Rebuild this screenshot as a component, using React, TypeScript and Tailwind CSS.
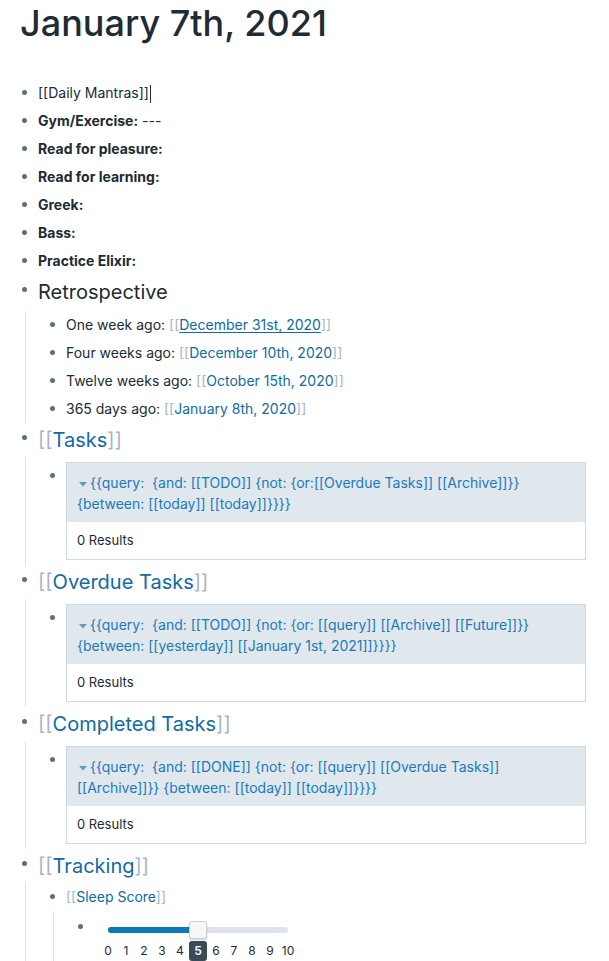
import React from "react";

const font = { fontFamily: "Inter, 'Noto Sans', sans-serif" };

function Dot({ top = "mt-[11px]" }: { top?: string }) {
  return (
    <div className="w-[18px] shrink-0">
      <div className={`ml-[2px] ${top} h-[5px] w-[5px] rounded-full bg-[#5c7080]`} />
    </div>
  );
}

function Row({ children }: { children: React.ReactNode }) {
  return (
    <div className="flex h-[28px] items-start">
      <Dot />
      <div className="text-[14px] leading-[28px] text-[#202b33]">{children}</div>
    </div>
  );
}

function Children({ children }: { children: React.ReactNode }) {
  return <div className="ml-[5px] border-l border-[#dbe2e8] pl-[22px]">{children}</div>;
}

function Br({ c }: { c: string }) {
  return <span className="text-[#a7b6c2]">{c}</span>;
}

function Ref({ children, underline }: { children: React.ReactNode; underline?: boolean }) {
  return (
    <span>
      <Br c="[[" />
      <span className={`text-[#106ba3] ${underline ? "underline underline-offset-2" : ""}`}>{children}</span>
      <Br c="]]" />
    </span>
  );
}

function Heading({ children, tall }: { children: React.ReactNode; tall?: boolean }) {
  return (
    <div className={`flex items-start ${tall ? "h-[36px]" : "h-[34px]"}`}>
      <Dot top="mt-[12px]" />
      <div className="text-[20px] leading-[34px] text-[#202b33]">{children}</div>
    </div>
  );
}

function Query({ lines }: { lines: React.ReactNode }) {
  return (
    <div className="flex items-start py-[5px]">
      <Dot />
      <div className="flex-1 border border-[#ced9e0]">
        <div className="whitespace-pre-wrap bg-[#e1e8ed] pb-[8px] pl-[10px] pr-[10px] pt-[9px] text-[14px] leading-[21px] text-[#1a7ab9]">
          {lines}
        </div>
        <div className="bg-white pl-[10px] text-[13px] leading-[37px] text-[#202b33]">0 Results</div>
      </div>
    </div>
  );
}

function Tri() {
  return (
    <svg width="12" height="8" viewBox="0 0 12 8" className="mr-[1px] inline-block align-middle">
      <path d="M2 2 L10 2 L6 6.5 Z" fill="#5b9bc8" />
    </svg>
  );
}

function Slider() {
  const nums = [0, 1, 2, 3, 4, 5, 6, 7, 8, 9, 10];
  return (
    <div className="flex items-start">
      <Dot top="mt-[13px]" />
      <div className="pl-[14px] pt-[16px]">
        <div className="relative h-[6px] w-[180px] rounded-full bg-[#dde3e8]">
          <div className="h-[6px] w-[90px] rounded-full bg-[#0f78b8]" />
          <div className="absolute left-[81px] top-[-6px] h-[18px] w-[18px] rounded-[3px] border border-[#c9d1d8] bg-[#f5f8fa] shadow-[0_1px_2px_rgba(16,22,26,0.2)]" />
        </div>
        <div className="-ml-[9px] mt-[8px] flex w-[198px]">
          {nums.map((n) =>
            n === 5 ? (
              <div key={n} className="flex h-[20px] w-[18px] items-center justify-center rounded-[3px] bg-[#394b59] text-[12px] font-semibold text-white">
                {n}
              </div>
            ) : (
              <div key={n} className="flex h-[20px] w-[18px] items-center justify-center text-[12px] text-[#202b33]">
                {n}
              </div>
            )
          )}
        </div>
      </div>
    </div>
  );
}

export default function App() {
  return (
    <div className="min-h-[961px] overflow-hidden bg-white pl-[20px] pr-[23px]" style={font}>
      <h1 className="text-[36px] font-medium leading-[46px] text-[#202b33]">January 7th, 2021</h1>
      <div className="mt-[33px]">
        <Row>
          <span>[[Daily Mantras]]</span>
          <span className="ml-[1px] inline-block h-[18px] w-[1px] bg-[#202b33] align-middle" />
        </Row>
        <Row>
          <b>Gym/Exercise:</b> ---
        </Row>
        <Row>
          <b>Read for pleasure:</b>
        </Row>
        <Row>
          <b>Read for learning:</b>
        </Row>
        <Row>
          <b>Greek:</b>
        </Row>
        <Row>
          <b>Bass:</b>
        </Row>
        <Row>
          <b>Practice Elixir:</b>
        </Row>

        <Heading tall>Retrospective</Heading>
        <Children>
          <Row>
            One week ago: <Ref underline>December 31st, 2020</Ref>
          </Row>
          <Row>
            Four weeks ago: <Ref>December 10th, 2020</Ref>
          </Row>
          <Row>
            Twelve weeks ago: <Ref>October 15th, 2020</Ref>
          </Row>
          <Row>
            365 days ago: <Ref>January 8th, 2020</Ref>
          </Row>
        </Children>

        <Heading>
          <Ref>Tasks</Ref>
        </Heading>
        <Children>
          <Query
            lines={
              <>
                <Tri />
                {"{{query:  {and: [[TODO]] {not: {or:[[Overdue Tasks]] [[Archive]]}}"}
                <br />
                {"{between: [[today]] [[today]]}}}}"}
              </>
            }
          />
        </Children>

        <Heading>
          <Ref>Overdue Tasks</Ref>
        </Heading>
        <Children>
          <Query
            lines={
              <>
                <Tri />
                {"{{query:  {and: [[TODO]] {not: {or: [[query]] [[Archive]] [[Future]]}}"}
                <br />
                {"{between: [[yesterday]] [[January 1st, 2021]]}}}}"}
              </>
            }
          />
        </Children>

        <Heading>
          <Ref>Completed Tasks</Ref>
        </Heading>
        <Children>
          <Query
            lines={
              <>
                <Tri />
                {"{{query:  {and: [[DONE]] {not: {or: [[query]] [[Overdue Tasks]]"}
                <br />
                {"[[Archive]]}} {between: [[today]] [[today]]}}}}"}
              </>
            }
          />
        </Children>

        <Heading>
          <Ref>Tracking</Ref>
        </Heading>
        <Children>
          <Row>
            <Ref>Sleep Score</Ref>
          </Row>
          <Children>
            <Slider />
          </Children>
        </Children>
      </div>
    </div>
  );
}
